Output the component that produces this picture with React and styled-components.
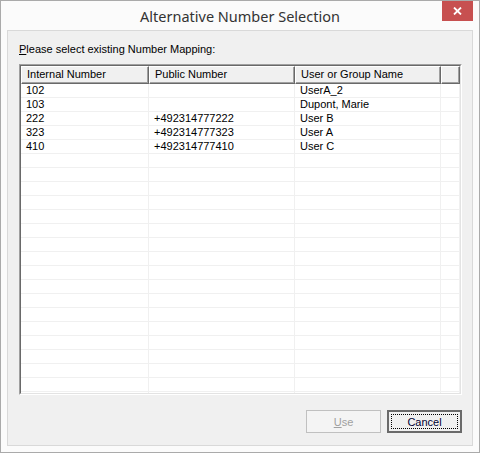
import React from 'react';
import styled, { createGlobalStyle } from 'styled-components';

const GlobalStyle = createGlobalStyle`
    html, body {
        margin: 0;
        padding: 0;
        background: #ffffff;
    }
    * {
        box-sizing: border-box;
    }
`;

const Window = styled.div`
    width: 480px;
    height: 453px;
    border: 1px solid #aaaaaa;
    background: #fbfbfb;
    display: flex;
    flex-direction: column;
    padding: 0 6px 6px 6px;
    font-family: 'Liberation Sans', Arial, sans-serif;
    font-size: 11px;
    color: #000;
`;

const TitleBar = styled.div`
    height: 29px;
    display: grid;
    grid-template-columns: 1fr auto 1fr;
`;

const Title = styled.div`
    grid-column: 2;
    font-family: 'Noto Sans', 'Open Sans', sans-serif;
    font-size: 14.5px;
    color: #333;
    line-height: 29px;
    padding-top: 1px;
`;

const CloseButton = styled.div`
    grid-column: 3;
    justify-self: end;
    width: 31px;
    height: 20px;
    background: #c75050;
    display: flex;
    align-items: center;
    justify-content: center;
`;

const Client = styled.div`
    flex: 1;
    border: 1px solid #d9d9d9;
    background: #f0f0f0;
    padding: 11px 10px 11px 11px;
    display: flex;
    flex-direction: column;
`;

const Label = styled.div`
    height: 14px;
    line-height: 14px;
    margin-bottom: 8px;
    & u {
        text-decoration: underline;
    }
`;

const ListView = styled.div`
    height: 331px;
    border: 1px solid;
    border-color: #a0a0a0 #ffffff #ffffff #a0a0a0;
    display: flex;
`;

const ListInner = styled.div`
    flex: 1;
    border: 1px solid;
    border-color: #696969 #e3e3e3 #e3e3e3 #696969;
    background: #ffffff;
    overflow: hidden;
    display: flex;
    flex-direction: column;
`;

const HeaderRow = styled.div`
    display: flex;
    height: 18px;
    background: #f0f0f0;
    flex-shrink: 0;
`;

const HeaderCell = styled.div`
    width: ${p => p.$w}px;
    flex: ${p => (p.$fill ? 1 : 'none')};
    border: 1px solid;
    border-color: #ffffff #696969 #696969 #ffffff;
    box-shadow: inset -1px -1px #a0a0a0;
    padding-left: 5px;
    line-height: 15px;
    white-space: nowrap;
    overflow: hidden;
`;

const Row = styled.div`
    display: flex;
    height: 14px;
    flex-shrink: 0;
    border-bottom: 1px solid #f0f0f0;
`;

const Cell = styled.div`
    width: ${p => p.$w}px;
    flex: ${p => (p.$fill ? 1 : 'none')};
    border-right: 1px solid #f0f0f0;
    padding-left: 5px;
    line-height: 13px;
    white-space: nowrap;
    overflow: hidden;
`;

const ButtonRow = styled.div`
    margin-top: 15px;
    display: flex;
    justify-content: flex-end;
    gap: 6px;
`;

const Button = styled.div`
    width: 75px;
    height: 23px;
    display: flex;
    align-items: center;
    justify-content: center;
    background: ${p => (p.$disabled ? '#f4f4f4' : '#f0f0f0')};
    color: ${p => (p.$disabled ? '#a0a0a0' : '#000033')};
    border: ${p => (p.$default ? '2px solid #6a6a6a' : '1px solid #c0c0c0')};
    padding: 2px;
    & u {
        text-decoration: underline;
    }
`;

const FocusRect = styled.div`
    width: 100%;
    height: 100%;
    border: 1px dotted #000;
    display: flex;
    align-items: center;
    justify-content: center;
`;

const columns = [128, 146, 146];

const data = [
    ['102', '', 'UserA_2'],
    ['103', '', 'Dupont, Marie'],
    ['222', '+492314777222', 'User B'],
    ['323', '+492314777323', 'User A'],
    ['410', '+492314777410', 'User C'],
];

const rows = [...data];
while (rows.length < 23) rows.push(['', '', '']);

const App = () => (
    <>
        <GlobalStyle />
        <Window>
            <TitleBar>
                <Title>Alternative Number Selection</Title>
                <CloseButton>
                    <svg width="9" height="8" viewBox="0 0 9 8">
                        <path d="M1 0.5 L8 7.5 M8 0.5 L1 7.5" stroke="#fff" strokeWidth="1.8" />
                    </svg>
                </CloseButton>
            </TitleBar>
            <Client>
                <Label><u>P</u>lease select existing Number Mapping:</Label>
                <ListView>
                    <ListInner>
                        <HeaderRow>
                            <HeaderCell $w={columns[0]}>Internal Number</HeaderCell>
                            <HeaderCell $w={columns[1]}>Public Number</HeaderCell>
                            <HeaderCell $w={columns[2]}>User or Group Name</HeaderCell>
                            <HeaderCell $fill />
                        </HeaderRow>
                        {rows.map((r, i) => (
                            <Row key={i}>
                                <Cell $w={columns[0]}>{r[0]}</Cell>
                                <Cell $w={columns[1]}>{r[1]}</Cell>
                                <Cell $w={columns[2]}>{r[2]}</Cell>
                                <Cell $fill />
                            </Row>
                        ))}
                    </ListInner>
                </ListView>
                <ButtonRow>
                    <Button $disabled><span><u>U</u>se</span></Button>
                    <Button $default>
                        <FocusRect>Cancel</FocusRect>
                    </Button>
                </ButtonRow>
            </Client>
        </Window>
    </>
);

export default App;
